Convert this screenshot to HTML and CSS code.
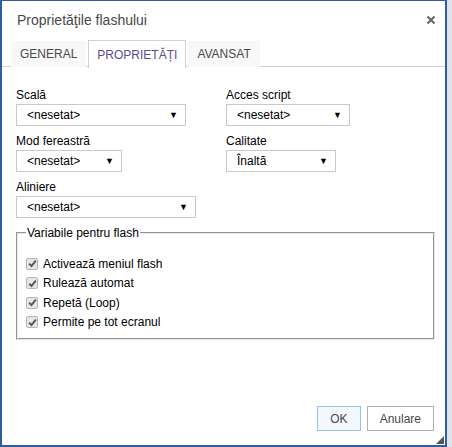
FILE: index.html
```html
<!DOCTYPE html>
<html>
<head>
<meta charset="utf-8">
<link rel="stylesheet" href="styles.css">
</head>
<body>
<div class="dialog">
  <div class="titlebar">
    <span class="title">Proprietăţile flashului</span>
    <span class="close">
      <svg width="10" height="10" viewBox="0 0 10 10"><path d="M1.5 1.5 L8.5 8.5 M8.5 1.5 L1.5 8.5" stroke="#6a6a6a" stroke-width="2.2"/></svg>
    </span>
  </div>
  <div class="tabs">
    <div class="tab">GENERAL</div>
    <div class="tab active">PROPRIETĂȚI</div>
    <div class="tab">AVANSAT</div>
  </div>
  <div class="content">
    <div class="row">
      <div class="field col-left">
        <div class="label">Scală</div>
        <div class="select w169"><span>&lt;nesetat&gt;</span><span class="arrow">▼</span></div>
      </div>
      <div class="field">
        <div class="label">Acces script</div>
        <div class="select w123"><span>&lt;nesetat&gt;</span><span class="arrow">▼</span></div>
      </div>
    </div>
    <div class="row">
      <div class="field col-left">
        <div class="label">Mod fereastră</div>
        <div class="select w105"><span>&lt;nesetat&gt;</span><span class="arrow">▼</span></div>
      </div>
      <div class="field">
        <div class="label">Calitate</div>
        <div class="select w109"><span>Înaltă</span><span class="arrow">▼</span></div>
      </div>
    </div>
    <div class="row">
      <div class="field col-left">
        <div class="label">Aliniere</div>
        <div class="select w179"><span>&lt;nesetat&gt;</span><span class="arrow">▼</span></div>
      </div>
    </div>
    <fieldset class="vars">
      <legend>Variabile pentru flash</legend>
      <div class="check"><span class="box"><svg width="9" height="9" viewBox="0 0 9 9"><path d="M1.2 4.8 L3.5 7 L7.8 1.6" fill="none" stroke="#555" stroke-width="1.9"/></svg></span>Activează meniul flash</div>
      <div class="check"><span class="box"><svg width="9" height="9" viewBox="0 0 9 9"><path d="M1.2 4.8 L3.5 7 L7.8 1.6" fill="none" stroke="#555" stroke-width="1.9"/></svg></span>Rulează automat</div>
      <div class="check"><span class="box"><svg width="9" height="9" viewBox="0 0 9 9"><path d="M1.2 4.8 L3.5 7 L7.8 1.6" fill="none" stroke="#555" stroke-width="1.9"/></svg></span>Repetă (Loop)</div>
      <div class="check"><span class="box"><svg width="9" height="9" viewBox="0 0 9 9"><path d="M1.2 4.8 L3.5 7 L7.8 1.6" fill="none" stroke="#555" stroke-width="1.9"/></svg></span>Permite pe tot ecranul</div>
    </fieldset>
  </div>
  <div class="footer">
    <div class="btn ok">OK</div>
    <div class="btn">Anulare</div>
  </div>
  <span class="resize"></span>
</div>
</body>
</html>
```
FILE: styles.css
```css
* { box-sizing: border-box; }
html, body { margin: 0; padding: 0; background: #dde4ee; }
body {
  font-family: "Liberation Sans", Arial, sans-serif;
  font-size: 12px;
  color: #000;
  width: 452px;
  height: 447px;
  overflow: hidden;
}
.dialog {
  position: relative;
  width: 447px;
  height: 447px;
  background: #fff;
  border: 1px solid #2e5da3;
  border-width: 1px 2px 2px 2px;
  display: flex;
  flex-direction: column;
}
.titlebar {
  height: 39px;
  display: flex;
  align-items: center;
  justify-content: space-between;
  padding: 0 9px 0 15px;
}
.title {
  font-size: 14px;
  color: #484848;
  margin-top: -1px;
}
.close { display: flex; margin-top: -1px; }
.tabs {
  display: flex;
  gap: 2px;
  padding-left: 9px;
  height: 27px;
  border-bottom: 1px solid #d1d1d1;
}
.tab {
  height: 26px;
  padding: 0 9px;
  background: #f8f8f8;
  color: #484848;
  font-size: 12px;
  display: flex;
  align-items: center;
  margin-top: 1px;
}
.tab.active {
  background: #fff;
  border: 1px solid #d1d1d1;
  border-bottom: none;
  margin-top: 0;
  margin-bottom: -1px;
  height: 28px;
  color: #5b4b96;
  padding: 0 8px;
}
.content {
  padding: 21px 0 0 14px;
  flex: 1;
}
.row { display: flex; margin-bottom: 8px; }
.col-left { width: 210px; }
.label { height: 16px; line-height: 14px; color: #000; }
.select {
  height: 22px;
  border: 1px solid #c9c9c9;
  display: flex;
  align-items: center;
  justify-content: space-between;
  padding: 0 7px 0 10px;
  color: #000;
}
.arrow { font-size: 9px; color: #000; }
.w169 { width: 170px; }
.w123 { width: 124px; }
.w105 { width: 106px; }
.w109 { width: 110px; }
.w179 { width: 180px; }
fieldset.vars {
  margin: 7px 0 0 0;
  width: 419px;
  border: 2px groove #e8e8e8;
  padding: 14px 0 11px 8px;
  height: 114px;
}
fieldset.vars legend {
  padding: 0 1px;
  margin-left: 0;
  color: #000;
}
.check {
  display: flex;
  align-items: center;
  height: 19.5px;
  gap: 5px;
}
.box {
  width: 12px;
  height: 12px;
  border: 1px solid #b5b5b5;
  border-radius: 2px;
  background: #e6e6e6;
  display: flex;
  align-items: center;
  justify-content: center;
}
.box svg { display: block; }
.footer {
  display: flex;
  justify-content: flex-end;
  gap: 6px;
  padding: 0 11px 14px 0;
}
.btn {
  height: 25px;
  padding: 0 12px;
  border: 1px solid #b0b0b0;
  background: #fff;
  display: flex;
  align-items: center;
  color: #484848;
}
.btn.ok {
  background: #f3f8ff;
  border-color: #95c3f5;
  padding: 0 12px;
}
.resize {
  position: absolute;
  right: 1px;
  bottom: 1px;
  width: 0;
  height: 0;
  border-style: solid;
  border-width: 0 0 8px 8px;
  border-color: transparent transparent #555 transparent;
}
```
